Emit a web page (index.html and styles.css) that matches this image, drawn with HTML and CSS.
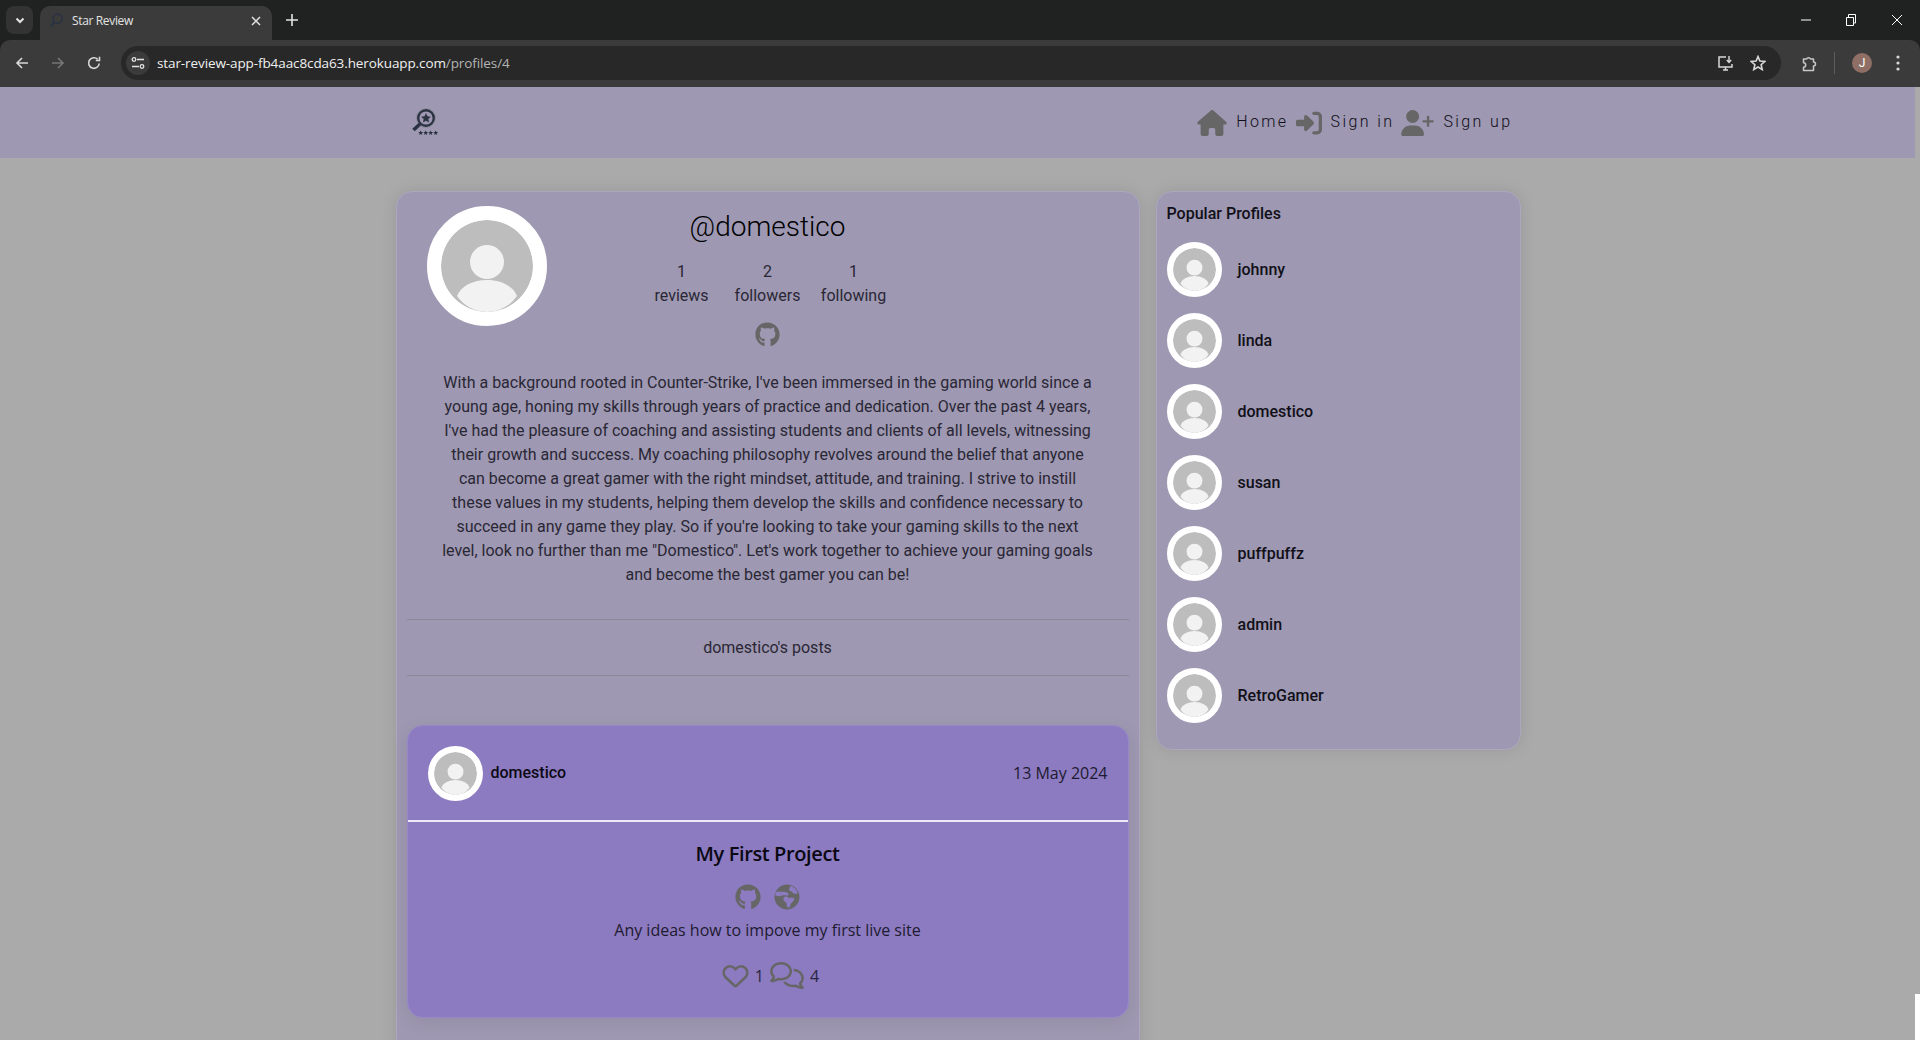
FILE: index.html
```html
<!DOCTYPE html>
<html>
    <head>
        <title>Star Review</title>
        <link rel="stylesheet" href="styles.css">
    </head>
    <body>
        <svg class="defs" width="0" height="0">
            <symbol id="avatar" viewBox="0 0 92 92">
                <circle cx="46" cy="46" r="46" fill="#bdbdbd"/>
                <circle cx="46" cy="42" r="17" fill="#f2f2f2"/>
                <path d="M16 76 C20 66 32 60 46 60 C60 60 72 66 76 76 C69 86 58 92 46 92 C34 92 23 86 16 76 Z" fill="#f2f2f2"/>
            </symbol>
            <symbol id="github" viewBox="0 0 496 512">
                <path d="M165.9 397.4c0 2-2.3 3.6-5.2 3.6-3.3 .3-5.6-1.3-5.6-3.6 0-2 2.3-3.6 5.2-3.6 3-.3 5.6 1.3 5.6 3.6zm-31.1-4.5c-.7 2 1.3 4.3 4.3 4.9 2.6 1 5.6 0 6.2-2s-1.3-4.3-4.3-5.2c-2.6-.7-5.5 .3-6.2 2.3zm44.2-1.7c-2.9 .7-4.9 2.6-4.6 4.9 .3 2 2.9 3.3 5.9 2.6 2.9-.7 4.9-2.6 4.6-4.6-.3-1.9-3-3.2-5.9-2.9zM244.8 8C106.1 8 0 113.3 0 252c0 110.9 69.8 205.8 169.5 239.2 12.8 2.3 17.3-5.6 17.3-12.1 0-6.2-.3-40.4-.3-61.4 0 0-70 15-84.7-29.8 0 0-11.4-29.1-27.8-36.6 0 0-22.9-15.7 1.6-15.4 0 0 24.9 2 38.6 25.8 21.9 38.6 58.6 27.5 72.9 20.9 2.3-16 8.8-27.1 16-33.7-55.9-6.2-112.3-14.3-112.3-110.5 0-27.5 7.6-41.3 23.6-58.9-2.6-6.5-11.1-33.3 2.6-67.9 20.9-6.5 69 27 69 27 20-5.6 41.5-8.5 62.8-8.5s42.8 2.9 62.8 8.5c0 0 48.1-33.6 69-27 13.7 34.7 5.2 61.4 2.6 67.9 16 17.7 25.8 31.5 25.8 58.9 0 96.5-58.9 104.2-114.8 110.5 9.2 7.9 17 22.9 17 46.4 0 33.7-.3 75.4-.3 83.6 0 6.5 4.6 14.4 17.3 12.1C428.2 457.8 496 362.9 496 252 496 113.3 383.5 8 244.8 8z"/>
            </symbol>
            <symbol id="star" viewBox="0 0 20 20">
                <polygon points="10,1 12.6,7 19,7.6 14.2,11.9 15.6,18.3 10,15 4.4,18.3 5.8,11.9 1,7.6 7.4,7"/>
            </symbol>
        </svg>

        <div class="browser">
            <div class="tabstrip">
                <div class="tab-search">
                    <svg width="12" height="12" viewBox="0 0 12 12"><path d="M2.5 4.5 L6 8 L9.5 4.5" fill="none" stroke="#e3e3e3" stroke-width="2"/></svg>
                </div>
                <div class="tab">
                    <svg class="tab-icon" width="16" height="16" viewBox="0 0 28 28">
                        <circle cx="15" cy="10" r="8" fill="none" stroke="#2b3342" stroke-width="3"/>
                        <path d="M9 16 L3 23" stroke="#2b3342" stroke-width="4"/>
                    </svg>
                    <span class="tab-title">Star Review</span>
                    <svg class="tab-close" width="10" height="10" viewBox="0 0 10 10"><path d="M1 1 L9 9 M9 1 L1 9" stroke="#e3e3e3" stroke-width="1.5"/></svg>
                </div>
                <svg class="new-tab" width="12" height="12" viewBox="0 0 12 12"><path d="M6 0 V12 M0 6 H12" stroke="#e3e3e3" stroke-width="1.6"/></svg>
                <div class="window-btns">
                    <svg width="10" height="10" viewBox="0 0 10 10"><path d="M0 5 H10" stroke="#fff"/></svg>
                    <svg width="10" height="12" viewBox="0 0 10 12"><path d="M.5 3.5 H7.5 V11.5 H.5 Z M2.5 3.5 V.5 H9.5 V9 H7.5" fill="none" stroke="#fff"/></svg>
                    <svg width="12" height="12" viewBox="0 0 12 12"><path d="M1 1 L11 11 M11 1 L1 11" stroke="#fff"/></svg>
                </div>
            </div>
            <div class="toolbar">
                <svg class="tool-btn" width="14" height="14" viewBox="0 0 14 14"><path d="M13 7 H2 M7 2 L2 7 L7 12" fill="none" stroke="#d8d8d8" stroke-width="1.6"/></svg>
                <svg class="tool-btn" width="14" height="14" viewBox="0 0 14 14"><path d="M1 7 H12 M7 2 L12 7 L7 12" fill="none" stroke="#767676" stroke-width="1.6"/></svg>
                <svg class="tool-btn" width="14" height="14" viewBox="0 0 14 14"><path d="M12.2 7.5 A5.3 5.3 0 1 1 10.6 3.2 M12.5 .8 V4.5 H8.8" fill="none" stroke="#d8d8d8" stroke-width="1.6"/></svg>
                <div class="omnibox">
                    <div class="site-info">
                        <svg width="14" height="14" viewBox="0 0 14 14"><path d="M6 3.5 H13 M1 10.5 H8" stroke="#e3e3e3" stroke-width="1.6"/><circle cx="3" cy="3.5" r="1.8" fill="none" stroke="#e3e3e3" stroke-width="1.3"/><circle cx="11" cy="10.5" r="1.8" fill="none" stroke="#e3e3e3" stroke-width="1.3"/></svg>
                    </div>
                    <span class="url">star-review-app-fb4aac8cda63.herokuapp.com<span class="url-path">/profiles/4</span></span>
                    <svg class="omni-install" width="17" height="17" viewBox="0 0 17 17"><path d="M9 2 H2 V12 H15 V9 M6 15 H11 M8.5 12 V15" fill="none" stroke="#d8d8d8" stroke-width="1.5"/><path d="M12 1 V7 M9.8 5 L12 7.4 L14.2 5" fill="none" stroke="#d8d8d8" stroke-width="1.4"/></svg>
                    <svg class="omni-star" width="16" height="16" viewBox="0 0 20 20"><polygon points="10,2 12.4,7.6 18.5,8.2 13.9,12.2 15.3,18.2 10,15 4.7,18.2 6.1,12.2 1.5,8.2 7.6,7.6" fill="none" stroke="#d8d8d8" stroke-width="2"/></svg>
                </div>
                <svg class="ext-icon" width="16" height="17" viewBox="0 0 16 17"><path d="M3 4 H5.6 A2.2 2.2 0 0 1 9.6 4 H12.5 V7 A2 2 0 0 1 12.5 11 V15.5 H2.5 V12.2 A2.2 2.2 0 0 0 2.5 7.8 V4 Z" fill="none" stroke="#c8c8c8" stroke-width="1.5" stroke-linejoin="round"/></svg>
                <span class="tool-sep"></span>
                <span class="profile-chip">J</span>
                <svg class="menu-dots" width="4" height="16" viewBox="0 0 4 16"><circle cx="2" cy="2" r="1.6" fill="#d8d8d8"/><circle cx="2" cy="8" r="1.6" fill="#d8d8d8"/><circle cx="2" cy="14" r="1.6" fill="#d8d8d8"/></svg>
            </div>
        </div>

        <div class="page">
            <div class="viewport">
                <nav class="navbar">
                    <div class="nav-inner">
                        <svg class="logo" width="30" height="30" viewBox="0 0 30 30">
                            <circle cx="16" cy="10" r="9.6" fill="none" stroke="#8d8d9c" stroke-width="1"/>
                            <circle cx="16" cy="10" r="7.8" fill="none" stroke="#2b3342" stroke-width="2.4"/>
                            <use href="#star" x="10.5" y="4.5" width="11" height="11" fill="#2b3342"/>
                            <path d="M10 16 L3.5 22" stroke="#2b3342" stroke-width="3.6"/>
                            <use href="#star" x="8" y="22" width="5.4" height="5.4" fill="#2b3342"/>
                            <use href="#star" x="13" y="22" width="5.4" height="5.4" fill="#2b3342"/>
                            <use href="#star" x="18" y="22" width="5.4" height="5.4" fill="#2b3342"/>
                            <use href="#star" x="23" y="22" width="5.4" height="5.4" fill="#2b3342"/>
                        </svg>
                        <div class="nav-links">
                            <a class="nav-link">
                                <svg class="nav-icon" width="30" height="26" viewBox="0 0 576 512"><path d="M575.8 255.5c0 18-15 32.1-32 32.1h-32l.7 160.2c0 2.7-.2 5.4-.5 8.1V472c0 22.1-17.9 40-40 40H456c-1.1 0-2.2 0-3.3-.1c-1.4 .1-2.8 .1-4.2 .1H416 392c-22.1 0-40-17.9-40-40V448 384c0-17.7-14.3-32-32-32H256c-17.7 0-32 14.3-32 32v64 24c0 22.1-17.9 40-40 40H160 128.1c-1.5 0-3-.1-4.5-.2c-1.2 .1-2.4 .2-3.6 .2H104c-22.1 0-40-17.9-40-40V360c0-.9 0-1.9 .1-2.8V287.6H32c-18 0-32-14-32-32.1c0-9 3-17 10-24L266.4 8c7-7 15-8 22-8s15 2 21 7L564.8 231.5c8 7 12 15 11 24z"/></svg>
                                <span class="nav-text">Home</span>
                            </a>
                            <a class="nav-link">
                                <svg class="nav-icon" width="26" height="26" viewBox="0 0 512 512"><path d="M217.9 105.9L340.7 228.7c7.2 7.2 11.3 17.1 11.3 27.3s-4.1 20.1-11.3 27.3L217.9 406.1c-6.4 6.4-15 9.9-24 9.9c-18.7 0-33.9-15.2-33.9-33.9l0-62.1L32 320c-17.7 0-32-14.3-32-32l0-64c0-17.7 14.3-32 32-32l128 0 0-62.1c0-18.7 15.2-33.9 33.9-33.9c9 0 17.6 3.6 24 9.9zM352 416l64 0c17.7 0 32-14.3 32-32l0-256c0-17.7-14.3-32-32-32l-64 0c-17.7 0-32-14.3-32-32s14.3-32 32-32l64 0c53 0 96 43 96 96l0 256c0 53-43 96-96 96l-64 0c-17.7 0-32-14.3-32-32s14.3-32 32-32z"/></svg>
                                <span class="nav-text">Sign in</span>
                            </a>
                            <a class="nav-link">
                                <svg class="nav-icon" width="33" height="26" viewBox="0 0 640 512"><path d="M96 128a128 128 0 1 1 256 0A128 128 0 1 1 96 128zM0 482.3C0 383.8 79.8 304 178.3 304h91.4C368.2 304 448 383.8 448 482.3c0 16.4-13.3 29.7-29.7 29.7H29.7C13.3 512 0 498.7 0 482.3zM504 312V248H440c-13.3 0-24-10.7-24-24s10.7-24 24-24h64V136c0-13.3 10.7-24 24-24s24 10.7 24 24v64h64c13.3 0 24 10.7 24 24s-10.7 24-24 24H552v64c0 13.3-10.7 24-24 24s-24-10.7-24-24z"/></svg>
                                <span class="nav-text">Sign up</span>
                            </a>
                        </div>
                    </div>
                </nav>

                <div class="container">
                    <main class="profile-card">
                        <div class="profile-top">
                            <svg class="avatar avatar-large"><use href="#avatar"/></svg>
                            <div class="profile-head">
                                <h3 class="profile-name">@domestico</h3>
                                <div class="stats">
                                    <div class="stat"><div>1</div><div>reviews</div></div>
                                    <div class="stat"><div>2</div><div>followers</div></div>
                                    <div class="stat"><div>1</div><div>following</div></div>
                                </div>
                                <svg class="icon profile-github"><use href="#github"/></svg>
                            </div>
                        </div>
                        <p class="bio">With a background rooted in Counter-Strike, I've been immersed in the gaming world since a young age, honing my skills through years of practice and dedication. Over the past 4 years, I've had the pleasure of coaching and assisting students and clients of all levels, witnessing their growth and success. My coaching philosophy revolves around the belief that anyone can become a great gamer with the right mindset, attitude, and training. I strive to instill these values in my students, helping them develop the skills and confidence necessary to succeed in any game they play. So if you're looking to take your gaming skills to the next level, look no further than me "Domestico". Let's work together to achieve your gaming goals and become the best gamer you can be!</p>
                        <div class="posts-heading">domestico's posts</div>

                        <article class="post">
                            <header class="post-header">
                                <svg class="avatar avatar-small"><use href="#avatar"/></svg>
                                <span class="post-owner">domestico</span>
                                <span class="post-date">13 May 2024</span>
                            </header>
                            <div class="post-body">
                                <h5 class="post-title">My First Project</h5>
                                <div class="post-links">
                                    <svg class="icon post-link"><use href="#github"/></svg>
                                    <svg class="icon post-link" viewBox="0 0 26 26"><path fill-rule="evenodd" d="M13 .5 A12.5 12.5 0 1 0 13 25.5 A12.5 12.5 0 1 0 13 .5 Z M1.6 8.4 C3.4 7.4 5.4 7.2 7 8 C9 7.4 12.5 7.6 14.4 9.4 C15 10.6 14.4 11.6 13 11.6 C11 11.2 9.6 11 8.2 11.6 C6.4 12.4 4 12.6 1.4 11.6 Z M9.6 13.4 C11 12.4 12.4 12.4 13.8 13 L15 14.2 L17 13.6 L19.8 14 C20.6 15 20.4 16.4 19.4 17 L17.8 18.4 C17 19.2 16.8 20.2 16.4 21.4 C16 22.8 15 24 13.8 23.6 C12.8 23 12.8 21.4 12.6 19.8 C12.4 18.6 11.6 18 10.6 17.4 C9.4 16.6 9 15 9.6 13.4 Z M16.6 1.8 C19.2 2.6 21.6 4.6 23 7 C23.6 8.2 23.6 9.4 22.6 10 C21 10.2 19.4 9.8 18.6 8.6 C18 7.6 17.4 7.2 16 7 C14.8 6.4 14.8 5 15.6 4.2 Z"/></svg>
                                </div>
                                <p class="post-desc">Any ideas how to impove my first live site</p>
                                <div class="post-meta">
                                    <svg class="meta-heart" viewBox="0 0 512 512"><path d="M225.8 468.2l-2.5-2.3L48.1 303.2C17.4 274.7 0 234.7 0 192.8v-3.3c0-70.4 50-130.8 119.2-144C158.6 37.9 198.9 47 231 69.6c9 6.4 17.4 13.8 25 22.3c4.2-4.8 8.7-9.2 13.5-13.3c3.7-3.2 7.5-6.2 11.5-9c0 0 0 0 0 0C313.1 47 353.4 37.9 392.8 45.4C462 58.6 512 119.1 512 189.5v3.3c0 41.9-17.4 81.9-48.1 110.4L288.7 465.9l-2.5 2.3c-8.2 7.6-19 11.9-30.2 11.9s-22-4.2-30.2-11.9zM239.1 145c-.4-.3-.7-.7-1-1.1l-17.8-20c0 0-.1-.1-.1-.1c0 0 0 0 0 0c-23.1-25.9-58-37.7-92-31.2C81.6 101.5 48 142.1 48 189.5v3.3c0 28.5 11.9 55.8 32.8 75.2L256 430.7 431.2 268c20.9-19.4 32.8-46.7 32.8-75.2v-3.3c0-47.3-33.6-88-80.1-96.9c-34-6.5-69 5.4-92 31.2c0 0 0 0-.1 .1s0 0-.1 .1l-17.8 20c-.3 .4-.7 .7-1 1.1c-4.5 4.5-10.6 7-16.9 7s-12.4-2.5-16.9-7z"/></svg>
                                    <span>1</span>
                                    <svg class="meta-comments" viewBox="0 0 640 512"><path d="M88.2 309.1c9.8-18.3 6.8-40.8-7.5-55.8C59.4 230.9 48 204 48 176c0-63.5 63.8-128 160-128s160 64.5 160 128s-63.8 128-160 128c-13.1 0-25.8-1.3-37.8-3.6c-10.4-2-21.2-.6-30.7 4.2c-4.1 2.1-8.3 4.1-12.6 6c-16 7.2-32.9 13.5-49.9 18c2.8-4.6 5.4-9.1 7.9-13.6c1.1-1.9 2.2-3.9 3.2-5.9zM208 352c114.9 0 208-78.8 208-176S322.9 0 208 0S0 78.8 0 176c0 41.8 17.2 80.1 45.9 110.3c-.9 1.7-1.9 3.5-2.8 5.1c-10.3 18.4-22.3 36.5-36.6 52.1c-6.6 7-8.3 17.2-4.6 25.9C5.8 378.3 14.4 384 24 384c43 0 86.5-13.3 122.7-29.7c4.8-2.2 9.6-4.5 14.2-6.8c15.1 3 30.9 4.5 47.1 4.5zM432 480c16.2 0 31.9-1.6 47.1-4.5c4.6 2.3 9.4 4.6 14.2 6.8C529.5 498.7 573 512 616 512c9.6 0 18.2-5.7 22-14.5c3.8-8.8 2-19-4.6-25.9c-14.2-15.6-26.2-33.7-36.6-52.1c-.9-1.7-1.9-3.4-2.8-5.1C622.8 384.1 640 345.8 640 304c0-94.4-87.9-171.5-198.2-175.8c4.1 15.2 6.2 31.2 6.2 47.8l0 .6c87.2 6.7 144 67.5 144 127.4c0 28-11.4 54.9-32.7 77.2c-14.3 15-17.3 37.6-7.5 55.8c1.1 2 2.2 4 3.2 5.9c2.5 4.5 5.2 9 7.9 13.6c-17-4.5-33.9-10.7-49.9-18c-4.3-1.9-8.5-3.9-12.6-6c-9.5-4.8-20.3-6.2-30.7-4.2c-12.1 2.4-24.7 3.6-37.8 3.6c-61.7 0-110-26.5-136.8-62.3c-16 5.4-32.8 9.4-50 11.8C279 439.9 350 480 432 480z"/></svg>
                                    <span>4</span>
                                </div>
                            </div>
                        </article>
                    </main>

                    <aside class="popular-card">
                        <div class="popular-title">Popular Profiles</div>
                        <div class="popular-row"><svg class="avatar avatar-small"><use href="#avatar"/></svg><span>johnny</span></div>
                        <div class="popular-row"><svg class="avatar avatar-small"><use href="#avatar"/></svg><span>linda</span></div>
                        <div class="popular-row"><svg class="avatar avatar-small"><use href="#avatar"/></svg><span>domestico</span></div>
                        <div class="popular-row"><svg class="avatar avatar-small"><use href="#avatar"/></svg><span>susan</span></div>
                        <div class="popular-row"><svg class="avatar avatar-small"><use href="#avatar"/></svg><span>puffpuffz</span></div>
                        <div class="popular-row"><svg class="avatar avatar-small"><use href="#avatar"/></svg><span>admin</span></div>
                        <div class="popular-row"><svg class="avatar avatar-small"><use href="#avatar"/></svg><span>RetroGamer</span></div>
                    </aside>
                </div>
            </div>
            <div class="scroll-strip">
                <div class="scroll-track"></div>
                <div class="scroll-corner"></div>
            </div>
        </div>
    </body>
</html>
```

FILE: styles.css
```css
html {
    overflow: hidden;
}

body {
    margin: 0;
    height: 1040px;
    overflow: hidden;
    display: flex;
    flex-direction: column;
    font-family: "Roboto", sans-serif;
    font-size: 16px;
    line-height: 24px;
    color: #1c1a24;
    background-color: #aaaaaa;
}

.defs {
    position: absolute;
}

/* browser chrome */
.browser {
    flex: none;
    background-color: #202221;
}

.tabstrip {
    height: 40px;
    display: flex;
    align-items: flex-start;
}

.tab-search {
    width: 27px;
    height: 28px;
    margin: 6px 0 0 6px;
    border-radius: 8px;
    background-color: #333333;
    display: flex;
    align-items: center;
    justify-content: center;
}

.tab {
    width: 232px;
    height: 34px;
    margin: 6px 0 0 7px;
    border-radius: 10px 10px 0 0;
    background-color: #3b3b3b;
    display: flex;
    align-items: center;
    padding: 0 11px 4px 9px;
    box-sizing: border-box;
}

.tab-icon {
    margin-right: 7px;
}

.tab-title {
    flex: 1;
    font-family: "Open Sans", sans-serif;
    font-size: 12px;
    letter-spacing: -0.35px;
    color: #e3e3e3;
}

.new-tab {
    margin: 14px 0 0 14px;
}

.window-btns {
    margin-left: auto;
    margin-top: 14px;
    display: flex;
    align-items: center;
    gap: 35px;
    padding-right: 17px;
}

.toolbar {
    height: 47px;
    box-sizing: border-box;
    padding: 6px 0 7px 0;
    background-color: #3b3b3b;
    border-radius: 10px 10px 0 0;
    display: flex;
    align-items: center;
}

.tool-btn {
    margin-left: 15px;
    margin-right: 7px;
}

.omnibox {
    width: 1660px;
    height: 34px;
    margin-left: 13px;
    border-radius: 17px;
    background-color: #282828;
    display: flex;
    align-items: center;
    box-sizing: border-box;
}

.site-info {
    width: 24px;
    height: 24px;
    margin-left: 5px;
    border-radius: 50%;
    background-color: #3b3b3b;
    display: flex;
    align-items: center;
    justify-content: center;
}

.url {
    margin-left: 7px;
    font-family: "Open Sans", sans-serif;
    font-size: 13.5px;
    letter-spacing: -0.1px;
    color: #f0f0f0;
}

.url-path {
    color: #b4b4b4;
}

.omni-install {
    margin-left: auto;
}

.omni-star {
    margin: 0 15px 0 16px;
}

.ext-icon {
    margin-left: 20px;
}

.tool-sep {
    width: 1px;
    height: 22px;
    margin-left: 17px;
    background-color: #5c5c5c;
}

.profile-chip {
    width: 20px;
    height: 20px;
    margin-left: 17px;
    border-radius: 50%;
    background-color: #8f6f65;
    color: #ffffff;
    font-size: 12px;
    line-height: 20px;
    text-align: center;
}

.menu-dots {
    margin-left: 24px;
}

/* page */
.page {
    flex: 1;
    min-height: 0;
    display: flex;
}

.viewport {
    flex: 1;
    min-width: 0;
    overflow: hidden;
}

.scroll-strip {
    width: 5px;
    display: flex;
    flex-direction: column;
}

.scroll-track {
    flex: 1;
}

.scroll-corner {
    height: 46px;
    background-color: #ffffff;
}

.navbar {
    height: 71px;
    background-color: #9e98b2;
}

.nav-inner {
    width: 1140px;
    height: 100%;
    margin: 0 auto;
    display: flex;
    align-items: center;
    justify-content: space-between;
}

.logo {
    margin-left: 22px;
}

.nav-links {
    display: flex;
    gap: 7px;
    padding-right: 15px;
}

.nav-link {
    display: flex;
    align-items: center;
    gap: 9px;
    letter-spacing: 2.4px;
    font-weight: 300;
    color: #0f0d16;
}

.nav-text {
    margin-bottom: 2px;
}

.nav-icon {
    fill: #666666;
}

.container {
    width: 1140px;
    margin: 33px auto 0 auto;
    display: flex;
    align-items: flex-start;
    justify-content: space-between;
    box-sizing: border-box;
    padding: 0 7px 0 8px;
}

.profile-card,
.popular-card {
    box-sizing: border-box;
    background-color: #9e98b2;
    border: 1px solid #aca7bd;
    border-radius: 16px;
    box-shadow: 0 0 16px rgba(0, 0, 0, 0.1);
}

.profile-card {
    width: 744px;
    padding: 14px 10px 40px 10px;
}

.profile-top {
    display: grid;
    grid-template-columns: 1fr auto 1fr;
}

.avatar {
    display: block;
    box-sizing: border-box;
    border-style: solid;
    border-color: #ffffff;
    border-radius: 50%;
    background-color: #ffffff;
}

.avatar-large {
    width: 120px;
    height: 120px;
    border-width: 14px;
    margin-left: 20px;
}

.avatar-small {
    flex: none;
    width: 55px;
    height: 55px;
    border-width: 6px;
}

.profile-head {
    display: flex;
    flex-direction: column;
    align-items: center;
}

.profile-name {
    margin: 0;
    font-size: 28px;
    line-height: 42px;
    font-weight: 300;
    color: #000000;
}

.stats {
    display: flex;
    margin-top: 12px;
}

.stat {
    width: 86px;
    text-align: center;
    font-weight: 400;
    color: #2a2735;
}

.icon {
    display: block;
    fill: #666666;
}

.profile-github {
    width: 25px;
    height: 25px;
    margin-top: 14px;
}

.bio {
    width: 656px;
    margin: 24px auto 0 auto;
    text-align: center;
    font-weight: 400;
    color: #2a2735;
}

.posts-heading {
    margin-top: 32px;
    height: 57px;
    line-height: 56px;
    text-align: center;
    font-weight: 400;
    color: #2a2735;
    border-top: 1px solid #8a8a96;
    border-bottom: 1px solid #8a8a96;
    box-sizing: border-box;
}

.post {
    width: 722px;
    margin-top: 49px;
    background-color: #8c7bc1;
    border: 1px solid #9888c8;
    border-radius: 16px;
    box-sizing: border-box;
    box-shadow: 0 4px 18px rgba(0, 0, 0, 0.08);
    font-family: "Open Sans", sans-serif;
}

.post-header {
    height: 94px;
    display: flex;
    align-items: center;
    padding: 0 20px 0 20px;
    border-bottom: 2px solid #eeeaf8;
}

.post-owner {
    margin: -1px 0 0 8px;
    font-family: "Roboto", sans-serif;
    font-size: 16px;
    font-weight: 500;
    color: #0c0a14;
}

.post-date {
    margin-left: auto;
    color: #1e1a30;
}

.post-body {
    padding-top: 17px;
    height: 195px;
    box-sizing: border-box;
    text-align: center;
}

.post-title {
    margin: 0;
    font-size: 20px;
    line-height: 30px;
    font-weight: 600;
    letter-spacing: -0.38px;
    color: #0a0812;
}

.post-links {
    display: flex;
    justify-content: center;
    gap: 13px;
    margin-top: 15px;
}

.post-link {
    width: 26px;
    height: 26px;
}

.post-desc {
    margin: 8px 0 0 0;
    color: #1e1a30;
}

.post-meta {
    display: flex;
    align-items: center;
    justify-content: center;
    gap: 6px;
    margin-top: 20px;
    padding-left: 6px;
    color: #2a2540;
}

.meta-heart {
    width: 27px;
    height: 26px;
    fill: #666666;
}

.meta-comments {
    width: 34px;
    height: 27px;
    fill: #666666;
}

.popular-card {
    width: 365px;
    height: 559px;
    padding: 10px 10px 0 10px;
}

.popular-title {
    font-weight: 500;
    height: 32px;
    color: #111018;
}

.popular-row {
    display: flex;
    align-items: center;
    gap: 16px;
    height: 71px;
    font-weight: 500;
    color: #111018;
}
```
